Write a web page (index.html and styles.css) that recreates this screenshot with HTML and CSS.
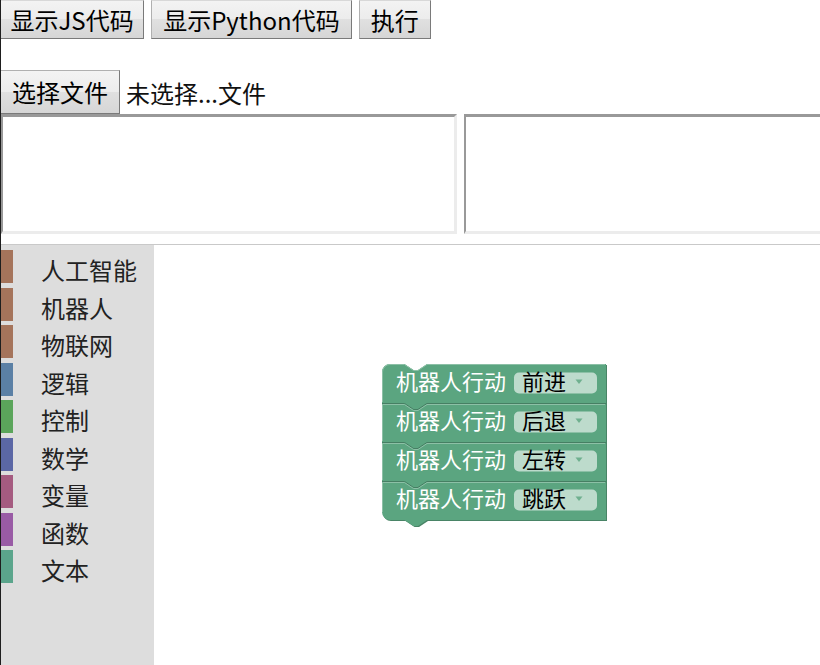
FILE: index.html
```html
<!DOCTYPE html>
<html lang="zh-CN">
<head>
<meta charset="utf-8">
<title>Blockly</title>
<link rel="stylesheet" href="styles.css">
</head>
<body>
<div class="page">
  <div class="toolbar">
    <button class="btn btn-narrow">显示JS代码</button>
    <button class="btn">显示Python代码</button>
    <button class="btn">执行</button>
  </div>
  <div class="file-row">
    <button class="btn file-btn">选择文件</button>
    <span class="file-name">未选择...文件</span>
  </div>
  <div class="editors">
    <textarea class="editor"></textarea>
    <textarea class="editor"></textarea>
  </div>
  <div class="workspace">
    <div class="toolbox">
      <div class="cat"><span class="cat-bar c-ai"></span><span class="cat-label">人工智能</span></div>
      <div class="cat"><span class="cat-bar c-ai"></span><span class="cat-label">机器人</span></div>
      <div class="cat"><span class="cat-bar c-ai"></span><span class="cat-label">物联网</span></div>
      <div class="cat"><span class="cat-bar c-logic"></span><span class="cat-label">逻辑</span></div>
      <div class="cat"><span class="cat-bar c-ctrl"></span><span class="cat-label">控制</span></div>
      <div class="cat"><span class="cat-bar c-math"></span><span class="cat-label">数学</span></div>
      <div class="cat"><span class="cat-bar c-var"></span><span class="cat-label">变量</span></div>
      <div class="cat"><span class="cat-bar c-func"></span><span class="cat-label">函数</span></div>
      <div class="cat"><span class="cat-bar c-text"></span><span class="cat-label">文本</span></div>
    </div>
    <div class="canvas">
      <svg class="blocks" width="666" height="420" viewBox="0 0 666 420">
        <g transform="translate(228,119)">
          <path class="b-dark" transform="translate(1,1)" d="M0,39 V8 A8,8 0 0 1 8,0 H22.5 l9,6 h4.5 l9,-6 H224 V39 H45 l-9,6 h-4.5 l-9,-6 Z"/>
          <path class="b-main" d="M0,39 V8 A8,8 0 0 1 8,0 H22.5 l9,6 h4.5 l9,-6 H224 V39 H45 l-9,6 h-4.5 l-9,-6 Z"/>
          <path class="b-light" d="M0.5,38 V8 A7.5,7.5 0 0 1 8,0.5 H22.5 l9,6 h4.5 l9,-6 H223"/>
          <text class="b-text" x="14" y="26">机器人行动</text>
          <rect class="b-field" x="132" y="8.5" width="83" height="21" rx="5"/>
          <text class="b-ftext" x="140" y="26">前进</text>
          <polygon class="b-arrow" points="193.5,15.5 200.5,15.5 197,20"/>
        </g>
        <g transform="translate(228,158)">
          <path class="b-dark" transform="translate(1,1)" d="M0,39 V0 H22.5 l9,6 h4.5 l9,-6 H224 V39 H45 l-9,6 h-4.5 l-9,-6 Z"/>
          <path class="b-main" d="M0,39 V0 H22.5 l9,6 h4.5 l9,-6 H224 V39 H45 l-9,6 h-4.5 l-9,-6 Z"/>
          <path class="b-seam" d="M0,0.5 H22.5 l9,6 h4.5 l9,-6 H224"/>
          <path class="b-light" d="M0.5,38 V1.5 H22.5 l9,6 h4.5 l9,-6 H223"/>
          <text class="b-text" x="14" y="26">机器人行动</text>
          <rect class="b-field" x="132" y="8.5" width="83" height="21" rx="5"/>
          <text class="b-ftext" x="140" y="26">后退</text>
          <polygon class="b-arrow" points="193.5,15.5 200.5,15.5 197,20"/>
        </g>
        <g transform="translate(228,197)">
          <path class="b-dark" transform="translate(1,1)" d="M0,39 V0 H22.5 l9,6 h4.5 l9,-6 H224 V39 H45 l-9,6 h-4.5 l-9,-6 Z"/>
          <path class="b-main" d="M0,39 V0 H22.5 l9,6 h4.5 l9,-6 H224 V39 H45 l-9,6 h-4.5 l-9,-6 Z"/>
          <path class="b-seam" d="M0,0.5 H22.5 l9,6 h4.5 l9,-6 H224"/>
          <path class="b-light" d="M0.5,38 V1.5 H22.5 l9,6 h4.5 l9,-6 H223"/>
          <text class="b-text" x="14" y="26">机器人行动</text>
          <rect class="b-field" x="132" y="8.5" width="83" height="21" rx="5"/>
          <text class="b-ftext" x="140" y="26">左转</text>
          <polygon class="b-arrow" points="193.5,15.5 200.5,15.5 197,20"/>
        </g>
        <g transform="translate(228,236)">
          <path class="b-dark" transform="translate(1,1)" d="M0,31 V0 H22.5 l9,6 h4.5 l9,-6 H224 V39 H45 l-9,6 h-4.5 l-9,-6 H8 A8,8 0 0 1 0,31 Z"/>
          <path class="b-main" d="M0,31 V0 H22.5 l9,6 h4.5 l9,-6 H224 V39 H45 l-9,6 h-4.5 l-9,-6 H8 A8,8 0 0 1 0,31 Z"/>
          <path class="b-seam" d="M0,0.5 H22.5 l9,6 h4.5 l9,-6 H224"/>
          <path class="b-light" d="M0.5,31 V1.5 H22.5 l9,6 h4.5 l9,-6 H223"/>
          <text class="b-text" x="14" y="26">机器人行动</text>
          <rect class="b-field" x="132" y="8.5" width="83" height="21" rx="5"/>
          <text class="b-ftext" x="140" y="26">跳跃</text>
          <polygon class="b-arrow" points="193.5,15.5 200.5,15.5 197,20"/>
        </g>
      </svg>
    </div>
  </div>
</div>
</body>
</html>
```

FILE: styles.css
```css
* {
  box-sizing: border-box;
}

html,
body {
  margin: 0;
  padding: 0;
  background: #fff;
  overflow: hidden;
}

body {
  font-family: "Noto Sans CJK SC", "Noto Sans", sans-serif;
  color: #000;
}

.page {
  width: 820px;
  height: 665px;
  overflow: hidden;
  border-left: 1px solid #1e1e1e;
}

.toolbar {
  display: flex;
  gap: 7px;
  margin-left: -1px;
  height: 39px;
}

.btn {
  font-family: "Noto Sans CJK SC", "Noto Sans", sans-serif;
  font-size: 24px;
  line-height: 1;
  color: #000;
  height: 39px;
  padding: 0 11px;
  margin: 0;
  border: 1px solid;
  border-color: #b0b0b0 #7a7a7a #7a7a7a #b0b0b0;
  border-top-color: #d8d8d8;
  border-radius: 0;
  background: linear-gradient(#f3f3f3, #ececec 50%, #e0e0e0 50%, #d6d6d6);
}

.btn-narrow {
  padding: 0 9.5px;
}

.file-row {
  display: flex;
  align-items: center;
  margin-top: 31px;
  margin-left: -1px;
  height: 44px;
}

.file-btn {
  height: 44px;
  border-top-color: #b0b0b0;
}

.file-name {
  font-size: 24px;
  margin-left: 6px;
  color: #111;
}

.editors {
  display: flex;
  gap: 7px;
  height: 120px;
  overflow: hidden;
}

.editor {
  flex: none;
  width: 456px;
  height: 120px;
  margin: 0;
  padding: 2px;
  resize: none;
  background: #fff;
  border-style: solid;
  border-width: 3px 3px 3px 2px;
  border-color: #999 #ececec #ececec #999;
  outline: none;
}

.workspace {
  display: flex;
  margin-top: 10px;
  height: 421px;
  border-top: 1px solid #c9c9c9;
}

.toolbox {
  flex: none;
  width: 153px;
  background: #ddd;
  padding-top: 3px;
}

.cat {
  display: flex;
  height: 37.5px;
}

.cat-bar {
  flex: none;
  width: 12px;
  height: 33px;
  margin-top: 2px;
}

.cat-label {
  font-size: 24px;
  line-height: 33px;
  padding-top: 5px;
  margin-left: 28px;
  color: #222;
}

.c-ai { background: #a5745b; }
.c-logic { background: #5b80a5; }
.c-ctrl { background: #5ba55b; }
.c-math { background: #5b67a5; }
.c-var { background: #a55b80; }
.c-func { background: #995ba5; }
.c-text { background: #5ba58c; }

.canvas {
  flex: 1;
  position: relative;
  background: #fff;
}

.blocks {
  position: absolute;
  left: 0;
  top: 0;
}

.b-main {
  fill: #5ba580;
}

.b-dark {
  fill: #498466;
}

.b-light {
  fill: none;
  stroke: #8cc0a6;
  stroke-width: 1;
}

.b-seam {
  fill: none;
  stroke: #467f63;
  stroke-width: 1;
}

.b-text {
  font-family: "Noto Sans CJK SC", sans-serif;
  font-size: 22px;
  fill: #fff;
}

.b-field {
  fill: #fff;
  fill-opacity: 0.6;
}

.b-ftext {
  font-family: "Noto Sans CJK SC", sans-serif;
  font-size: 22px;
  fill: #000;
}

.b-arrow {
  fill: #5ba580;
  fill-opacity: 0.8;
}
```
